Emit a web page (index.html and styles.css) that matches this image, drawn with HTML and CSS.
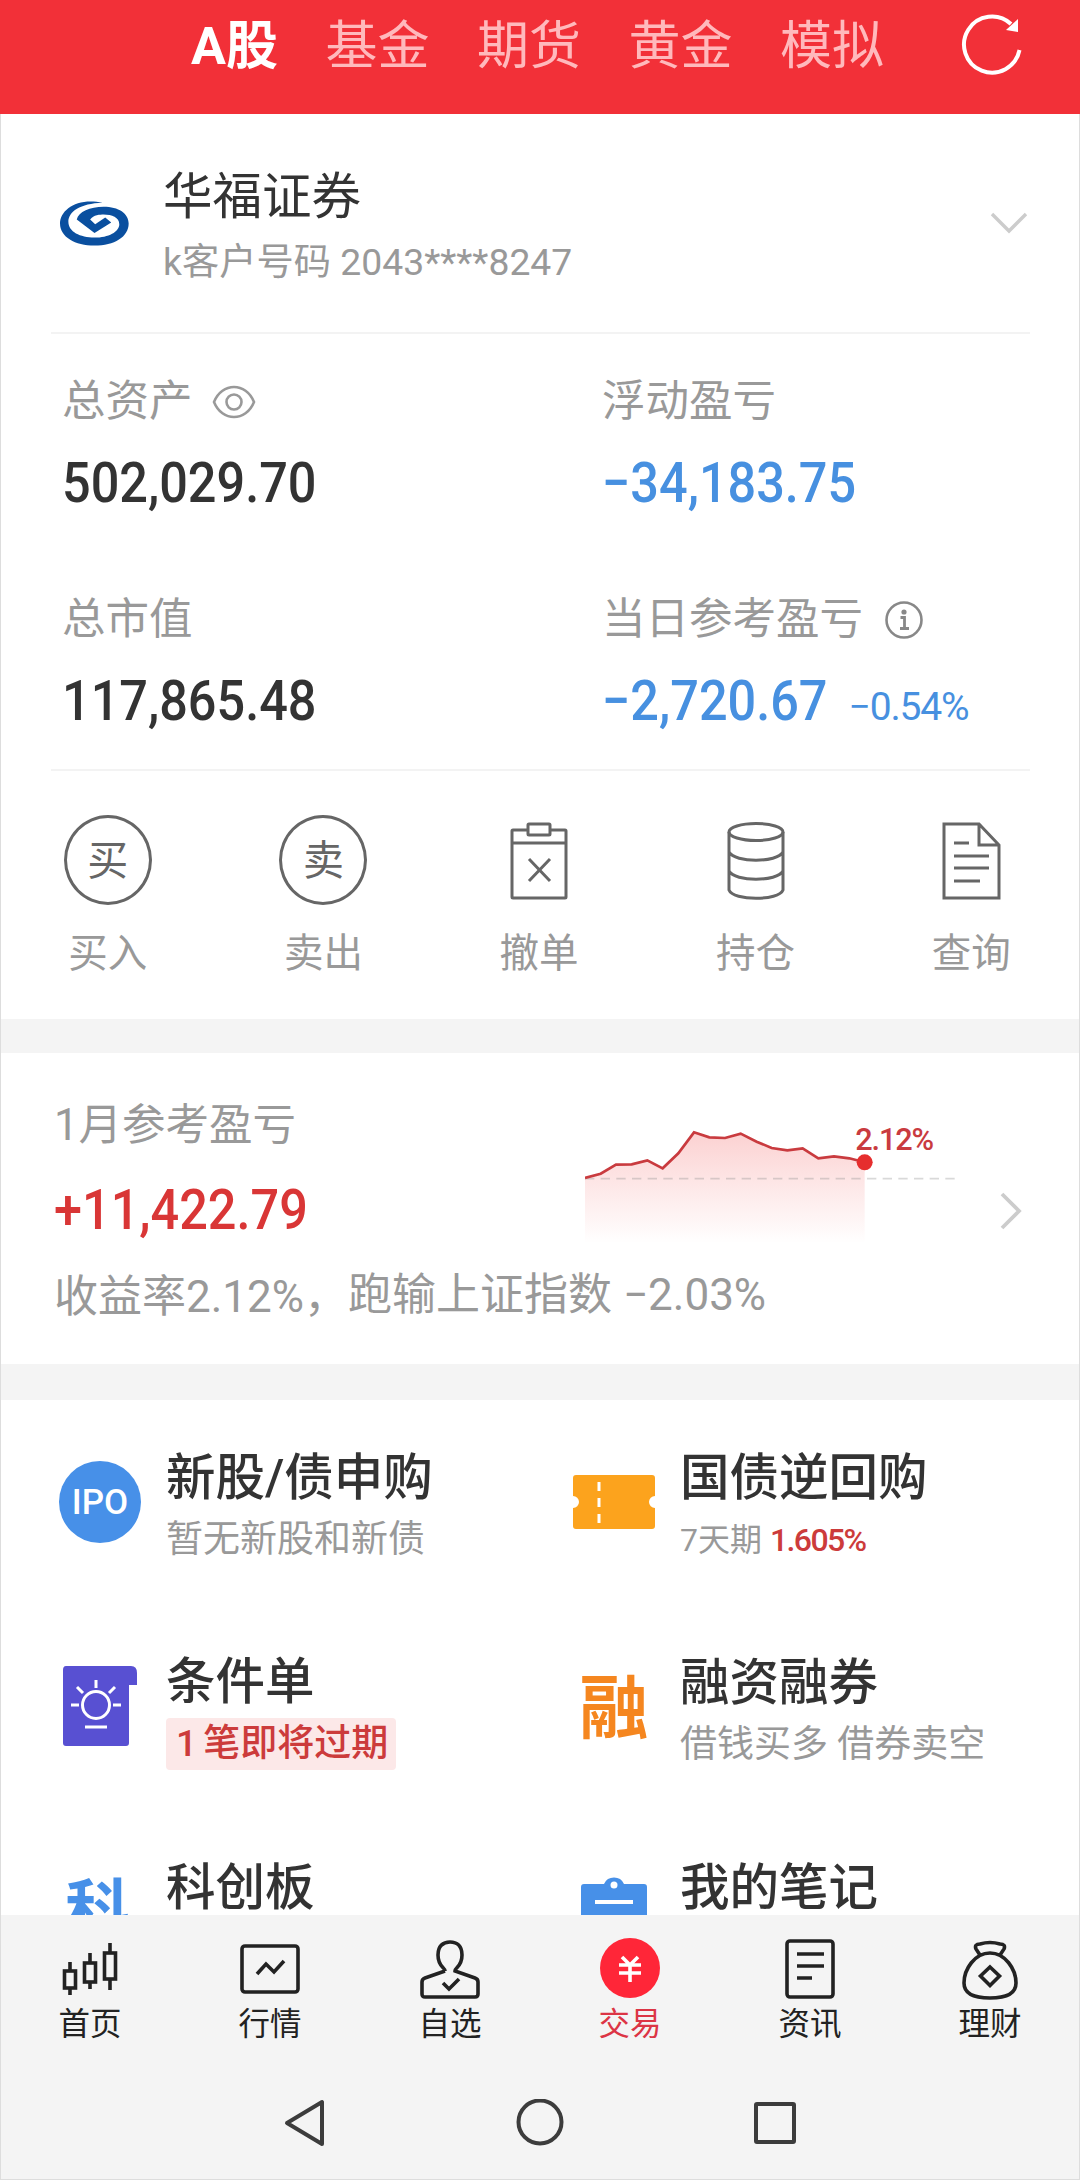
FILE: index.html
```html
<!DOCTYPE html>
<html lang="zh-CN">
<head>
  <meta charset="utf-8">
  <title>交易</title>
  <link rel="stylesheet" href="styles.css">
</head>
<body>
  <div class="page">
    <header class="header">
      <nav class="tabs">
        <a class="tab active">A股</a>
        <a class="tab">基金</a>
        <a class="tab">期货</a>
        <a class="tab">黄金</a>
        <a class="tab">模拟</a>
      </nav>
      <svg class="refresh" viewBox="0 0 64 64" width="64" height="64">
        <path d="M59.5 38 A28 28 0 1 1 51 12" fill="none" stroke="#fff" stroke-width="4"/>
        <path d="M46 18 L58 7 L58 20 Z" fill="#fff"/>
      </svg>
    </header>

    <section class="account">
      <svg class="logo" viewBox="57 60 212 140" width="71" height="47">
        <path fill="#0a4f9f" d="M187 68 C110 52 60 90 60 130 C60 170 105 196 163 196 C222 196 265 170 265 130 C265 100 235 80 190 80 C150 80 115 95 110 118 L163 158 L213 127 L195 112 L165 132 L150 118 C160 104 180 103 190 103 C215 103 237 112 237 132 C237 155 205 172 163 172 C120 172 85 155 85 125 C85 95 120 70 187 68 Z"/>
      </svg>
      <div class="account-info">
        <div class="account-name">华福证券</div>
        <div class="account-no">k客户号码 2043****8247</div>
      </div>
      <svg class="chevron" viewBox="0 0 40 24" width="40" height="24">
        <path d="M3 3 L20 20 L37 3" fill="none" stroke="#ccc" stroke-width="3.4"/>
      </svg>
    </section>

    <section class="assets">
      <div class="asset">
        <div class="label">总资产
          <svg class="eye" viewBox="0 0 44 34" width="44" height="34">
            <path d="M2 17 C10 -3 34 -3 42 17 C34 37 10 37 2 17 Z" fill="none" stroke="#999" stroke-width="2.6"/>
            <circle cx="22" cy="17" r="7.5" fill="none" stroke="#999" stroke-width="2.6"/>
          </svg>
        </div>
        <div class="value"><span class="num">502,029.70</span></div>
      </div>
      <div class="asset">
        <div class="label">浮动盈亏</div>
        <div class="value down"><span class="num">−34,183.75</span></div>
      </div>
      <div class="asset">
        <div class="label">总市值</div>
        <div class="value"><span class="num">117,865.48</span></div>
      </div>
      <div class="asset">
        <div class="label">当日参考盈亏
          <svg class="info" viewBox="0 0 40 40" width="40" height="40">
            <circle cx="20" cy="20" r="17.5" fill="none" stroke="#888" stroke-width="2.6"/>
            <circle cx="20" cy="12" r="2.6" fill="#888"/>
            <path d="M16.5 17.5 H20.5 V28.5 M16 28.5 H25" fill="none" stroke="#888" stroke-width="2.8"/>
          </svg>
        </div>
        <div class="value down"><span class="num">−2,720.67</span><span class="rate">−0.54%</span></div>
      </div>
    </section>

    <section class="actions">
      <div class="action">
        <div class="round">买</div>
        <span>买入</span>
      </div>
      <div class="action">
        <div class="round">卖</div>
        <span>卖出</span>
      </div>
      <div class="action">
        <svg class="line-icon" viewBox="0 0 90 90" width="90" height="90">
          <rect x="18" y="15" width="54" height="68" rx="1"/>
          <path d="M18 28 H72"/>
          <rect x="34" y="9" width="22" height="11" rx="1" fill="#fff"/>
          <path d="M35 44 L56 66 M56 44 L35 66"/>
        </svg>
        <span>撤单</span>
      </div>
      <div class="action">
        <svg class="line-icon" viewBox="0 0 90 90" width="90" height="90">
          <ellipse cx="45" cy="17" rx="27" ry="8.5"/>
          <path d="M18 17 V75 C22 86 68 86 72 75 V17 M18 37 C24 48 66 48 72 37 M18 56 C24 67 66 67 72 56"/>
        </svg>
        <span>持仓</span>
      </div>
      <div class="action">
        <svg class="line-icon" viewBox="0 0 90 90" width="90" height="90">
          <path d="M18 9 H53 L73 30 V83 H18 Z M53 9 V30 H73"/>
          <path d="M28 28 H43 M28 41 H63 M28 53 H63 M28 66 H54"/>
        </svg>
        <span>查询</span>
      </div>
    </section>

    <section class="month">
      <div class="month-info">
        <div class="label">1月参考盈亏</div>
        <div class="value up"><span class="num">+11,422.79</span></div>
        <div class="summary"><span class="yield">收益率2.12%，</span><span>跑输上证指数 −2.03%</span></div>
      </div>
      <svg class="chart" viewBox="75 30 1140 375" width="380" height="125">
        <defs>
          <linearGradient id="area" x1="0" y1="0" x2="0" y2="1">
            <stop offset="0" stop-color="#f03030" stop-opacity=".22"/>
            <stop offset="1" stop-color="#f03030" stop-opacity="0"/>
          </linearGradient>
        </defs>
        <path fill="url(#area)" d="M75 204 L122 191 L168 164 L215 163 L262 151 L308 175 L355 130 L402 67 L448 82 L495 84 L542 71 L590 95 L635 114 L682 121 L728 115 L775 145 L822 139 L868 145 L914 157 V400 H75 Z"/>
        <path d="M75 206 H1187" stroke="#888" stroke-opacity=".32" stroke-width="5" stroke-dasharray="28 19"/>
        <polyline fill="none" stroke="#c93b3f" stroke-width="8" points="75,204 122,191 168,164 215,163 262,151 308,175 355,130 402,67 448,82 495,84 542,71 590,95 635,114 682,121 728,115 775,145 822,139 868,145 914,157"/>
        <circle cx="914" cy="157" r="24" fill="#e62e2e"/>
        <text class="chart-text" x="886" y="120" textLength="236">2.12%</text>
      </svg>
      <svg class="arrow" viewBox="0 0 24 40" width="24" height="40">
        <path d="M3 3 L20 20 L3 37" fill="none" stroke="#ccc" stroke-width="3.8"/>
      </svg>
    </section>

    <section class="services">
      <div class="service">
        <div class="icon"><div class="ipo">IPO</div></div>
        <div>
          <div class="title">新股/债申购</div>
          <div class="sub">暂无新股和新债</div>
        </div>
      </div>
      <div class="service">
        <div class="icon">
          <svg viewBox="0 0 82 54" width="82" height="54">
            <path fill="#fca31d" d="M3 0 H79 Q82 0 82 3 V21 A6 6 0 0 0 82 33 V51 Q82 54 79 54 H3 Q0 54 0 51 V33 A6 6 0 0 0 0 21 V3 Q0 0 3 0 Z"/>
            <path d="M26 7 V48" stroke="#fff" stroke-width="3" stroke-dasharray="9 7"/>
          </svg>
        </div>
        <div>
          <div class="title">国债逆回购</div>
          <div class="sub small">7天期 <b>1.605%</b></div>
        </div>
      </div>
      <div class="service raised">
        <div class="icon">
          <svg viewBox="0 0 76 80" width="76" height="80">
            <path fill="#5850d2" d="M4 0 H69 Q75 0 75 7 V19 H67 V77 Q67 80 64 80 H4 Q1 80 1 77 V4 Q1 0 4 0 Z"/>
            <g fill="none" stroke="#fff" stroke-width="3">
              <circle cx="34" cy="39" r="13.5"/>
              <path d="M34 14 V22 M15 21 L21 27 M53 21 L47 27 M9 39 H17 M51 39 H59 M23 61 H45"/>
            </g>
          </svg>
        </div>
        <div>
          <div class="title">条件单</div>
          <div class="sub tag">1 笔即将过期</div>
        </div>
      </div>
      <div class="service">
        <div class="icon word orange">融</div>
        <div>
          <div class="title">融资融券</div>
          <div class="sub">借钱买多 借券卖空</div>
        </div>
      </div>
      <div class="service">
        <div class="icon word blue">科</div>
        <div>
          <div class="title">科创板</div>
          <div class="sub">&nbsp;</div>
        </div>
      </div>
      <div class="service">
        <div class="icon">
          <svg class="note" viewBox="0 0 66 80" width="66" height="80">
            <path fill="#4790e8" d="M3 10 H23 A11 11 0 0 1 43 10 H63 Q66 10 66 13 V80 H0 V13 Q0 10 3 10 Z"/>
            <circle cx="33" cy="11" r="3.5" fill="#fff"/>
            <path d="M14 28 H52" stroke="#fff" stroke-width="4"/>
          </svg>
        </div>
        <div>
          <div class="title">我的笔记</div>
          <div class="sub">&nbsp;</div>
        </div>
      </div>
    </section>

    <footer class="bottom">
      <nav class="menu">
        <a class="menu-item">
          <svg viewBox="0 0 60 62" width="60" height="62">
            <path d="M10 24 V32 M10 50 V57 M30 15 V24 M30 44 V51 M50 5 V15 M50 41 V52"/>
            <rect x="4.5" y="33" width="11" height="17"/>
            <rect x="24.500" y="25" width="11" height="19"/>
            <rect x="44.500" y="15" width="11" height="26"/>
          </svg>
          首页
        </a>
        <a class="menu-item">
          <svg viewBox="0 0 60 62" width="60" height="62">
            <rect x="2" y="8" width="56" height="46" rx="3"/>
            <path d="M17 36 L26 26 L34 34 L44 23"/>
          </svg>
          行情
        </a>
        <a class="menu-item">
          <svg viewBox="0 0 60 62" width="60" height="62">
            <path d="M25 33 C25 29 18 29 18 17 C18 8 23 4 30 4 C37 4 42 8 42 17 C42 29 35 29 35 33 L55 40 Q58 41 58 44 V56 Q58 59 55 59 H5 Q2 59 2 56 V44 Q2 41 5 40 L25 33"/>
            <path d="M23 45 L29 51 L39 41"/>
          </svg>
          自选
        </a>
        <a class="menu-item on">
          <svg viewBox="0 0 60 62" width="60" height="62">
            <circle class="coin" cx="30" cy="30" r="30"/>
            <path class="yen" d="M22 19 L30 27 L38 19 M19 27 H41 M19 35 H41 M30 27 V44"/>
          </svg>
          交易
        </a>
        <a class="menu-item">
          <svg viewBox="0 0 60 62" width="60" height="62">
            <rect x="7" y="3" width="46" height="56" rx="3"/>
            <path d="M17 16 H44 M17 28 H44 M17 40 H32"/>
          </svg>
          资讯
        </a>
        <a class="menu-item">
          <svg viewBox="0 0 60 62" width="60" height="62">
            <path d="M20 17 L16 11 Q14 6 20 6 Q30 3 40 6 Q46 6 44 11 L40 17"/>
            <path d="M30 15 C15 15 4 31 4 45 C4 55 12 60 30 60 C48 60 56 55 56 45 C56 31 45 15 30 15 Z M30 29 L39.500 38 L30 47.500 L20.500 38 Z"/>
          </svg>
          理财
        </a>
      </nav>
      <div class="system">
        <svg viewBox="0 0 48 48" width="48" height="48"><path d="M41 3 V45 L6 24 Z"/></svg>
        <svg viewBox="0 0 48 48" width="48" height="48"><circle cx="24" cy="23" r="21.5"/></svg>
        <svg viewBox="0 0 48 48" width="48" height="48"><rect x="5" y="5" width="38" height="38" rx="1"/></svg>
      </div>
    </footer>
  </div>
</body>
</html>
```
FILE: styles.css
```css
* {
  box-sizing: border-box;
}

body {
  margin: 0;
  font-family: Roboto, "Noto Sans CJK SC", sans-serif;
  color: #333;
  background-color: #f4f4f4;
}

.page {
  width: 1080px;
  height: 2180px;
  overflow: hidden;
  display: flex;
  flex-direction: column;
  box-shadow: inset 0 0 0 1px #ddd;
}

.page > * {
  flex: none;
}

.header {
  height: 114px;
  padding: 12px 56px 0 191px;
  background-color: #f23038;
  display: flex;
  justify-content: space-between;
  align-items: flex-start;
}

.tabs {
  display: flex;
  gap: 47.5px;
}

.tab {
  font-size: 52px;
  line-height: 70px;
  color: #ffb9bc;
  white-space: nowrap;
}

.tab.active {
  width: 87px;
  color: #fff;
  font-weight: bold;
}

.account,
.assets,
.actions,
.month,
.services {
  background-color: #fff;
  border-left: 1px solid #ddd;
  border-right: 1px solid #ddd;
}

.account {
  height: 218px;
  padding: 45px 50px 0 58px;
  display: flex;
}

.logo {
  margin-top: 41px;
}

.account-info {
  flex: 1;
  padding-left: 33px;
}

.account-name {
  font-size: 49.5px;
  line-height: 76px;
}

.account-no {
  font-size: 37.3px;
  line-height: 54px;
  color: #999;
}

.chevron {
  margin-top: 52px;
}

.assets {
  height: 437px;
  padding: 33px 0 0 61px;
  display: grid;
  grid-template-columns: 540px 1fr;
  grid-template-rows: 218px 218px;
  position: relative;
}

/* hairlines above and below the figures */
.assets::before,
.actions::before {
  content: "";
  position: absolute;
  top: 0;
  left: 50px;
  right: 49px;
  height: 2px;
  background-color: #f3f3f3;
}

.label {
  display: flex;
  align-items: center;
  font-size: 43.5px;
  line-height: 74px;
  color: #999;
}

.eye {
  margin-left: 19px;
}

.info {
  margin-left: 21px;
}

.value {
  display: flex;
  align-items: baseline;
  font-size: 56px;
  font-weight: 500;
  line-height: 88px;
  white-space: nowrap;
}

/* condensed digits */
.num {
  transform: scaleX(.9);
  transform-origin: 0 0;
}

.down {
  color: #4790e0;
}

.up {
  color: #d93636;
}

.rate {
  margin-left: -4px;
  font-size: 39px;
  font-weight: 400;
  letter-spacing: -1.2px;
}

.actions {
  height: 250px;
  padding: 46px 0 0;
  display: flex;
  position: relative;
}

.action {
  width: 216px;
  display: flex;
  flex-direction: column;
  align-items: center;
  font-size: 39.5px;
  line-height: 60px;
  color: #999;
}

.action:nth-child(-n+3) {
  position: relative;
  left: -1px;
}

.action span {
  margin-top: 19px;
}

.round {
  width: 88px;
  height: 90px;
  border: 3px solid #666;
  border-radius: 50%;
  font-size: 41px;
  line-height: 87px;
  text-align: center;
  color: #666;
}

.line-icon {
  fill: none;
  stroke: #666;
  stroke-width: 3;
}

.month {
  margin-top: 34px;
  height: 311px;
  padding: 36px 0 0 53px;
  display: flex;
}

.month-info {
  width: 531px;
}

.month .value {
  line-height: 95px;
}

.summary {
  display: flex;
  font-size: 44px;
  line-height: 74px;
  color: #999;
  white-space: nowrap;
}

.yield {
  width: 297px;
  padding-top: 2px;
}

.chart {
  margin-top: 31px;
}

.chart-text {
  font-size: 92px;
  font-weight: 500;
  fill: #c93b3f;
}

.arrow {
  margin: 102px 0 0 34px;
}

.services {
  margin-top: 36px;
  height: 515px;
  overflow: hidden;
  display: grid;
  grid-template-columns: 514px 1fr;
  grid-template-rows: repeat(3, 205px);
}

.service {
  padding: 7px 0 0 57px;
  display: flex;
  align-items: center;
  gap: 24px;
}

.raised {
  padding-top: 5px;
}

.icon {
  width: 84px;
  height: 84px;
  margin-top: -8px;
  display: flex;
  justify-content: center;
  align-items: center;
}

.ipo {
  width: 82px;
  height: 82px;
  border-radius: 50%;
  background-color: #4790e8;
  color: #fff;
  font-size: 35px;
  font-weight: 500;
  line-height: 84px;
  text-align: center;
}

.note {
  margin-top: 4px;
}

.word {
  padding-bottom: 8px;
  font-size: 69px;
  font-weight: 700;
}

.orange {
  color: #f5861f;
}

.blue {
  padding-bottom: 14px;
  padding-right: 4px;
  font-size: 65px;
  color: #4790e8;
}

.title {
  font-size: 49.5px;
  font-weight: 500;
  line-height: 62px;
  white-space: nowrap;
}

.sub {
  margin-top: 5px;
  font-size: 37px;
  line-height: 52px;
  color: #999;
  white-space: nowrap;
}

.small {
  font-size: 32px;
}

.small b {
  font-weight: 500;
  letter-spacing: -1.6px;
  color: #cc3b3b;
}

.tag {
  width: 230px;
  padding-left: 10px;
  border-radius: 4px;
  background-color: #fce8e8;
  color: #cc3b3b;
  font-weight: 500;
  word-spacing: -3px;
}

.bottom {
  height: 265px;
}

.menu {
  display: flex;
  padding-top: 23px;
}

.menu-item {
  width: 180px;
  display: flex;
  flex-direction: column;
  align-items: center;
  font-size: 31.5px;
  line-height: 49px;
  color: #222;
}

.menu-item svg {
  fill: none;
  stroke: #222;
  stroke-width: 3.6;
}

.menu-item.on {
  color: #dc3545;
}

.menu-item .coin {
  fill: #ff2638;
  stroke: none;
}

.menu-item .yen {
  stroke: #fff;
}

.system {
  margin-top: 50px;
  padding: 0 281px;
  display: flex;
  justify-content: space-between;
}

.system svg {
  fill: none;
  stroke: #3c3c3c;
  stroke-width: 4;
  stroke-linejoin: round;
}
```
